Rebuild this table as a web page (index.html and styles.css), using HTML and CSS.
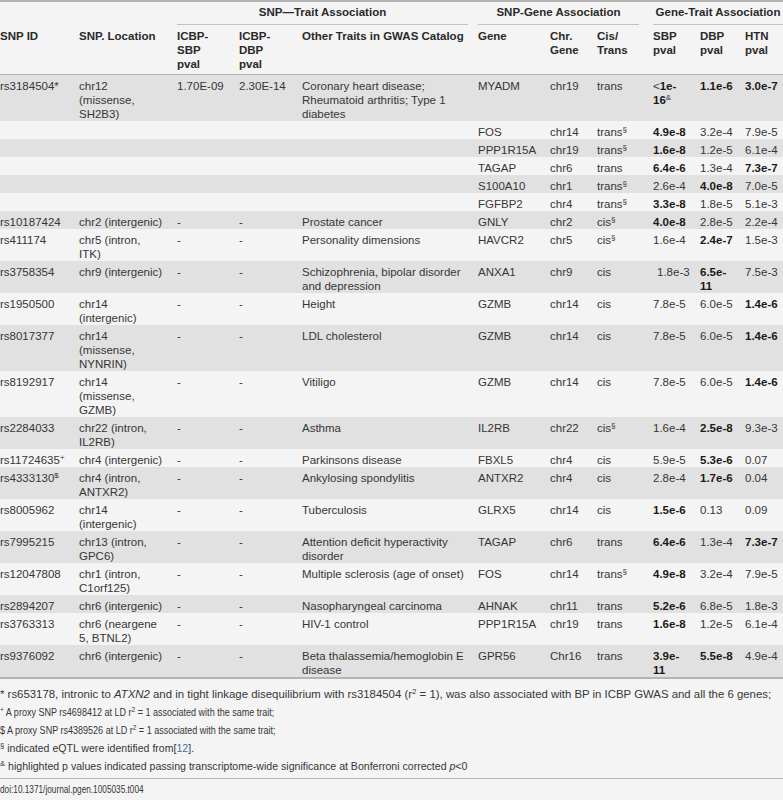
FILE: index.html
```html
<!DOCTYPE html>
<html lang="en">
<head>
  <meta charset="UTF-8">
  <title>Table 4 - SNP, gene and trait associations</title>
  <link rel="stylesheet" href="styles.css">
</head>
<body>
  <table class="assoc">
    <colgroup>
      <col style="width: 79px">
      <col style="width: 98px">
      <col style="width: 62px">
      <col style="width: 63px">
      <col style="width: 176px">
      <col style="width: 72px">
      <col style="width: 47px">
      <col style="width: 56px">
      <col style="width: 47px">
      <col style="width: 45px">
      <col style="width: 38px">
    </colgroup>
    <thead>
      <tr class="group-row">
        <th colspan="2"></th>
        <th colspan="3" class="group g-trait"><div class="group-title">SNP—Trait Association</div></th>
        <th colspan="3" class="group g-gene"><div class="group-title">SNP-Gene Association</div></th>
        <th colspan="3" class="group g-last"><div class="group-title">Gene-Trait Association</div></th>
      </tr>
      <tr class="head-row">
        <th>SNP ID</th>
        <th>SNP. Location</th>
        <th>ICBP-<br>SBP<br>pval</th>
        <th>ICBP-<br>DBP<br>pval</th>
        <th>Other Traits in GWAS Catalog</th>
        <th>Gene</th>
        <th>Chr.<br>Gene</th>
        <th>Cis/<br>Trans</th>
        <th>SBP<br>pval</th>
        <th>DBP<br>pval</th>
        <th>HTN<br>pval</th>
      </tr>
    </thead>
    <tbody>
      <tr>
        <td>rs3184504*</td>
        <td>chr12<br>(missense,<br>SH2B3)</td>
        <td>1.70E-09</td>
        <td>2.30E-14</td>
        <td>Coronary heart disease;<br>Rheumatoid arthritis; Type 1<br>diabetes</td>
        <td>MYADM</td>
        <td>chr19</td>
        <td>trans</td>
        <td>&lt;<b>1e-<br>16</b><sup>&amp;</sup></td>
        <td><b>1.1e-6</b></td>
        <td><b>3.0e-7</b></td>
      </tr>
      <tr>
        <td></td><td></td><td></td><td></td><td></td>
        <td>FOS</td><td>chr14</td><td>trans<sup>§</sup></td>
        <td><b>4.9e-8</b></td><td>3.2e-4</td><td>7.9e-5</td>
      </tr>
      <tr>
        <td></td><td></td><td></td><td></td><td></td>
        <td>PPP1R15A</td><td>chr19</td><td>trans<sup>§</sup></td>
        <td><b>1.6e-8</b></td><td>1.2e-5</td><td>6.1e-4</td>
      </tr>
      <tr>
        <td></td><td></td><td></td><td></td><td></td>
        <td>TAGAP</td><td>chr6</td><td>trans</td>
        <td><b>6.4e-6</b></td><td>1.3e-4</td><td><b>7.3e-7</b></td>
      </tr>
      <tr>
        <td></td><td></td><td></td><td></td><td></td>
        <td>S100A10</td><td>chr1</td><td>trans<sup>§</sup></td>
        <td>2.6e-4</td><td><b>4.0e-8</b></td><td>7.0e-5</td>
      </tr>
      <tr>
        <td></td><td></td><td></td><td></td><td></td>
        <td>FGFBP2</td><td>chr4</td><td>trans<sup>§</sup></td>
        <td><b>3.3e-8</b></td><td>1.8e-5</td><td>5.1e-3</td>
      </tr>
      <tr>
        <td>rs10187424</td><td>chr2 (intergenic)</td><td>-</td><td>-</td>
        <td>Prostate cancer</td>
        <td>GNLY</td><td>chr2</td><td>cis<sup>§</sup></td>
        <td><b>4.0e-8</b></td><td>2.8e-5</td><td>2.2e-4</td>
      </tr>
      <tr>
        <td>rs411174</td><td>chr5 (intron,<br>ITK)</td><td>-</td><td>-</td>
        <td>Personality dimensions</td>
        <td>HAVCR2</td><td>chr5</td><td>cis<sup>§</sup></td>
        <td>1.6e-4</td><td><b>2.4e-7</b></td><td>1.5e-3</td>
      </tr>
      <tr>
        <td>rs3758354</td><td>chr9 (intergenic)</td><td>-</td><td>-</td>
        <td>Schizophrenia, bipolar disorder<br>and depression</td>
        <td>ANXA1</td><td>chr9</td><td>cis</td>
        <td class="inset">1.8e-3</td><td><b>6.5e-<br>11</b></td><td>7.5e-3</td>
      </tr>
      <tr>
        <td>rs1950500</td><td>chr14<br>(intergenic)</td><td>-</td><td>-</td>
        <td>Height</td>
        <td>GZMB</td><td>chr14</td><td>cis</td>
        <td>7.8e-5</td><td>6.0e-5</td><td><b>1.4e-6</b></td>
      </tr>
      <tr>
        <td>rs8017377</td><td>chr14<br>(missense,<br>NYNRIN)</td><td>-</td><td>-</td>
        <td>LDL cholesterol</td>
        <td>GZMB</td><td>chr14</td><td>cis</td>
        <td>7.8e-5</td><td>6.0e-5</td><td><b>1.4e-6</b></td>
      </tr>
      <tr>
        <td>rs8192917</td><td>chr14<br>(missense,<br>GZMB)</td><td>-</td><td>-</td>
        <td>Vitiligo</td>
        <td>GZMB</td><td>chr14</td><td>cis</td>
        <td>7.8e-5</td><td>6.0e-5</td><td><b>1.4e-6</b></td>
      </tr>
      <tr>
        <td>rs2284033</td><td>chr22 (intron,<br>IL2RB)</td><td>-</td><td>-</td>
        <td>Asthma</td>
        <td>IL2RB</td><td>chr22</td><td>cis<sup>§</sup></td>
        <td>1.6e-4</td><td><b>2.5e-8</b></td><td>9.3e-3</td>
      </tr>
      <tr>
        <td>rs11724635<sup>+</sup></td><td>chr4 (intergenic)</td><td>-</td><td>-</td>
        <td>Parkinsons disease</td>
        <td>FBXL5</td><td>chr4</td><td>cis</td>
        <td>5.9e-5</td><td><b>5.3e-6</b></td><td>0.07</td>
      </tr>
      <tr>
        <td>rs4333130<sup>$</sup></td><td>chr4 (intron,<br>ANTXR2)</td><td>-</td><td>-</td>
        <td>Ankylosing spondylitis</td>
        <td>ANTXR2</td><td>chr4</td><td>cis</td>
        <td>2.8e-4</td><td><b>1.7e-6</b></td><td>0.04</td>
      </tr>
      <tr>
        <td>rs8005962</td><td>chr14<br>(intergenic)</td><td>-</td><td>-</td>
        <td>Tuberculosis</td>
        <td>GLRX5</td><td>chr14</td><td>cis</td>
        <td><b>1.5e-6</b></td><td>0.13</td><td>0.09</td>
      </tr>
      <tr>
        <td>rs7995215</td><td>chr13 (intron,<br>GPC6)</td><td>-</td><td>-</td>
        <td>Attention deficit hyperactivity<br>disorder</td>
        <td>TAGAP</td><td>chr6</td><td>trans</td>
        <td><b>6.4e-6</b></td><td>1.3e-4</td><td><b>7.3e-7</b></td>
      </tr>
      <tr>
        <td>rs12047808</td><td>chr1 (intron,<br>C1orf125)</td><td>-</td><td>-</td>
        <td>Multiple sclerosis (age of onset)</td>
        <td>FOS</td><td>chr14</td><td>trans<sup>§</sup></td>
        <td><b>4.9e-8</b></td><td>3.2e-4</td><td>7.9e-5</td>
      </tr>
      <tr>
        <td>rs2894207</td><td>chr6 (intergenic)</td><td>-</td><td>-</td>
        <td>Nasopharyngeal carcinoma</td>
        <td>AHNAK</td><td>chr11</td><td>trans</td>
        <td><b>5.2e-6</b></td><td>6.8e-5</td><td>1.8e-3</td>
      </tr>
      <tr>
        <td>rs3763313</td><td>chr6 (neargene<br>5, BTNL2)</td><td>-</td><td>-</td>
        <td>HIV-1 control</td>
        <td>PPP1R15A</td><td>chr19</td><td>trans</td>
        <td><b>1.6e-8</b></td><td>1.2e-5</td><td>6.1e-4</td>
      </tr>
      <tr>
        <td>rs9376092</td><td>chr6 (intergenic)</td><td>-</td><td>-</td>
        <td>Beta thalassemia/hemoglobin E<br>disease</td>
        <td>GPR56</td><td>Chr16</td><td>trans</td>
        <td><b>3.9e-<br>11</b></td><td><b>5.5e-8</b></td><td>4.9e-4</td>
      </tr>
    </tbody>
  </table>

  <div class="notes">
    <div class="note note-first">* rs653178, intronic to <i>ATXN2</i> and in tight linkage disequilibrium with rs3184504 (r<sup>2</sup> = 1), was also associated with BP in ICBP GWAS and all the 6 genes;</div>
    <div class="note"><span class="narrow dense"><sup>+</sup> A proxy SNP rs4698412 at LD r<sup>2</sup> = 1 associated with the same trait;</span></div>
    <div class="note"><span class="narrow dense">$ A proxy SNP rs4389526 at LD r<sup>2</sup> = 1 associated with the same trait;</span></div>
    <div class="note"><span class="narrow"><sup>§</sup> indicated eQTL were identified from[<a href="#ref12" class="ref">12</a>].</span></div>
    <div class="note"><span class="narrow"><sup>&amp;</sup> highlighted p values indicated passing transcriptome-wide significance at Bonferroni corrected <i>p</i>&lt;0</span></div>
  </div>

  <div class="doi"><span class="narrow doi-text">doi:10.1371/journal.pgen.1005035.t004</span></div>
</body>
</html>
```

FILE: styles.css
```css
html,
body {
  overflow: hidden;
}
body {
  margin: 0;
  background-color: #f4f4f4;
  font-family: 'Liberation Sans', Arial, Helvetica, sans-serif;
  font-size: 11.5px;
  color: #363636;
}
.assoc {
  width: 783px;
  table-layout: fixed;
  border-collapse: separate;
  border-spacing: 0;
  border-top: 2px solid #b4b4b4;
  border-bottom: 2px solid #b4b4b4;
}
.assoc th,
.assoc td {
  padding: 4px 6px 0 0;
  line-height: 14px;
  text-align: left;
  vertical-align: top;
  white-space: nowrap;
}
.assoc th {
  font-weight: bold;
  color: #2a2a2a;
}
.assoc td.inset {
  padding-left: 4px;
}
.group-row th {
  padding-top: 3px;
}
.group.g-trait {
  padding-right: 10px;
}
.group.g-gene {
  padding-right: 14px;
}
.group.g-last {
  padding-right: 0;
}
.group-title {
  text-align: center;
  padding-bottom: 5px;
  border-bottom: 1px solid #c2c2c2;
}
.head-row th {
  padding-bottom: 3px;
  border-bottom: 1px solid #b4b4b4;
}
.assoc tbody tr:nth-child(odd) {
  background-color: #e1e1e1;
}
.assoc b {
  color: #1a1a1a;
}
sup {
  font-size: 8px;
  line-height: 0;
  vertical-align: 4px;
}
.notes {
  margin-top: 6px;
  padding-bottom: 3px;
  border-bottom: 1px solid #bababa;
}
.note {
  line-height: 18px;
  white-space: nowrap;
}
.note-first {
  font-size: 11.4px;
}
.narrow {
  display: inline-block;
  font-size: 11px;
  transform: scaleX(0.96);
  transform-origin: left center;
}
.narrow.dense {
  transform: scaleX(0.82);
}
.narrow.doi-text {
  transform: scaleX(0.75);
}
.ref {
  color: #3b6db3;
  text-decoration: none;
}
.doi {
  padding-top: 3px;
  line-height: 14px;
  white-space: nowrap;
}
```
